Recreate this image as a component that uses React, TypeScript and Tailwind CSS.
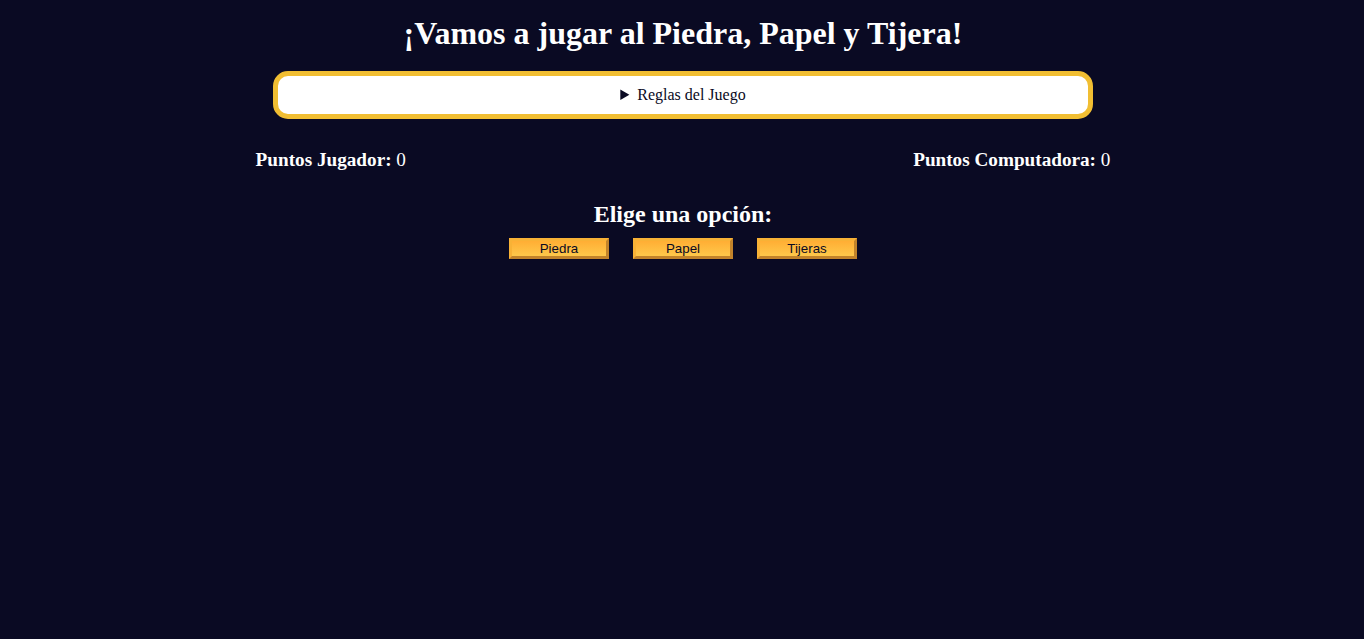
export default function App() {
  const options = ['Piedra', 'Papel', 'Tijeras']

  return (
    <div className="min-h-screen bg-[#0a0a23] pl-[2px] pt-[15px] text-center font-['Liberation_Serif',serif] text-white">
      <h1 className="text-[32px] font-bold leading-[37px]">
        ¡Vamos a jugar al Piedra, Papel y Tijera!
      </h1>

      {/* reglas */}
      <details className="mx-auto mt-[19px] w-[820px] rounded-[15px] border-[5px] border-[#f1be32] bg-white py-[10px] text-[16px] leading-[18px] text-[#0a0a23]">
        <summary className="cursor-pointer">Reglas del Juego</summary>
        <p className="mt-2">
          Piedra gana a Tijera, Tijera gana a Papel y Papel gana a Piedra.
        </p>
      </details>

      {/* marcador */}
      <div className="mt-[30px] flex justify-around text-[19.2px] leading-[22px]">
        <p>
          <strong>Puntos Jugador:</strong> 0
        </p>
        <p>
          <strong>Puntos Computadora:</strong> 0
        </p>
      </div>

      <h2 className="mt-[29px] text-[24px] font-bold leading-[28px]">Elige una opción:</h2>

      <div className="mt-[10px] flex justify-center gap-6">
        {options.map((o) => (
          <button
            key={o}
            className="h-[21px] w-[100px] cursor-pointer border-[3px] border-t-[#f8b236] border-l-[#f8b236] border-r-[#c2832a] border-b-[#c2832a] bg-gradient-to-b from-[#ffae34] to-[#fec84a] font-['Liberation_Sans',sans-serif] text-[13.33px] leading-[14px] text-[#0a0a23]"
          >
            {o}
          </button>
        ))}
      </div>
    </div>
  )
}
